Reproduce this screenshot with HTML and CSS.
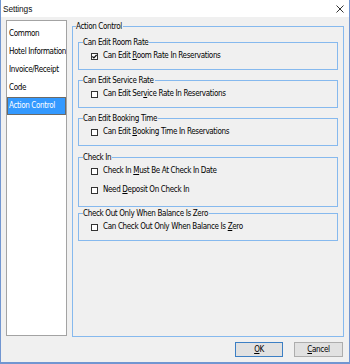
FILE: index.html
```html
<!DOCTYPE html>
<html>
<head>
<meta charset="utf-8">
<link rel="stylesheet" href="styles.css">
</head>
<body>
<div class="window">
  <div class="titlebar">
    <span class="title">Settings</span>
    <svg class="close" width="8" height="8" viewBox="0 0 8 8"><path d="M0.5 0.5 L7.5 7.5 M7.5 0.5 L0.5 7.5" stroke="#333" stroke-width="1" fill="none"/></svg>
  </div>
  <div class="main">
    <ul class="nav">
      <li class="nav-item">Common</li>
      <li class="nav-item">Hotel Information</li>
      <li class="nav-item">Invoice/Receipt</li>
      <li class="nav-item">Code</li>
      <li class="nav-item selected">Action Control</li>
    </ul>
    <fieldset class="group outer">
      <legend class="legend outer-legend">Action Control</legend>
      <fieldset class="group inner g1">
        <legend class="legend">Can Edit Room Rate</legend>
        <div class="row"><span class="cb checked"><svg width="5" height="5" viewBox="0 0 5 5"><path d="M0.4 2.4 L1.9 3.9 L4.6 0.9" stroke="#111" stroke-width="1.3" fill="none"/></svg></span><span>Can Edit <u>R</u>oom Rate In Reservations</span></div>
      </fieldset>
      <fieldset class="group inner g2">
        <legend class="legend">Can Edit Service Rate</legend>
        <div class="row"><span class="cb"></span><span>Can Edit Ser<u>v</u>ice Rate In Reservations</span></div>
      </fieldset>
      <fieldset class="group inner g3">
        <legend class="legend">Can Edit Booking Time</legend>
        <div class="row"><span class="cb"></span><span>Can Edit <u>B</u>ooking Time In Reservations</span></div>
      </fieldset>
      <fieldset class="group inner g4">
        <legend class="legend">Check In</legend>
        <div class="row"><span class="cb"></span><span>Check In <u>M</u>ust Be At Check In Date</span></div>
        <div class="row row-second"><span class="cb"></span><span>Need <u>D</u>eposit On Check In</span></div>
      </fieldset>
      <fieldset class="group inner g5">
        <legend class="legend">Check Out Only When Balance Is Zero</legend>
        <div class="row"><span class="cb"></span><span>Can Check Out Only When Balance Is <u>Z</u>ero</span></div>
      </fieldset>
    </fieldset>
  </div>
  <div class="buttons">
    <button class="btn btn-default"><u>O</u>K</button>
    <button class="btn"><u>C</u>ancel</button>
  </div>
</div>
</body>
</html>
```
FILE: styles.css
```css
html, body {
  margin: 0;
  padding: 0;
  background: #ffffff;
}

.window {
  width: 350px;
  height: 364px;
  box-sizing: border-box;
  border: 1px solid #7196d1;
  border-top: 0;
  border-bottom-width: 2px;
  background: #f0f0f0;
  font-family: "DejaVu Sans Condensed", "DejaVu Sans", sans-serif;
  font-stretch: condensed;
  font-size: 8px;
  letter-spacing: -0.35px;
  color: #000;
  display: flex;
  flex-direction: column;
}

.titlebar {
  height: 17px;
  flex: none;
  background: #ffffff;
  display: flex;
  align-items: center;
  justify-content: space-between;
  padding: 0 5px 0 2px;
}

.title {
  font-family: "Liberation Sans", Arial, sans-serif;
  font-stretch: normal;
  font-size: 8.3px;
  letter-spacing: -0.1px;
  color: #111;
}

.close {
  display: block;
}

.main {
  display: flex;
  gap: 5px;
  padding: 3px 5px 0 5px;
  flex: none;
}

.nav {
  list-style: none;
  margin: 0;
  padding: 4px 0 0 0;
  width: 61px;
  height: 316px;
  box-sizing: border-box;
  background: #ffffff;
  border: 1px solid #a3a3a3;
  flex: none;
  overflow: hidden;
}

.nav-item {
  height: 18px;
  line-height: 18px;
  padding-left: 2px;
  white-space: nowrap;
  overflow: hidden;
}

.nav-item.selected {
  background: #3399ff;
  color: #ffffff;
  border: 1px solid #6c6a66;
  line-height: 16px;
  padding-left: 1px;
  box-sizing: border-box;
}

.group {
  margin: 0;
  border: 1px solid #86b9ee;
  min-width: 0;
  box-sizing: border-box;
}

.legend {
  padding: 0 1px 0 0;
  margin-left: 4px;
  height: 11px;
  line-height: 11px;
  color: #000;
}

.outer {
  width: 272px;
  height: 316px;
  margin-top: 1px;
  padding: 5px 0 0 0;
  display: flex;
  flex-direction: column;
}

.outer-legend {
  margin-left: 3px;
}

.inner {
  margin-left: 5px;
  margin-right: 5px;
  padding: 3px 0 8px 0;
}

.g2, .g3 {
  margin-top: 5px;
}

.g4 {
  margin-top: 6px;
  padding-bottom: 11px;
}

.g5 {
  margin-top: 1px;
}

.row {
  display: flex;
  align-items: center;
  gap: 5px;
  height: 10px;
  line-height: 10px;
  margin-left: 12px;
  white-space: nowrap;
}

.row-second {
  margin-top: 9px;
}

.cb {
  width: 7px;
  height: 7px;
  box-sizing: border-box;
  border: 1px solid #333;
  background: #ffffff;
  display: flex;
  align-items: center;
  justify-content: center;
  flex: none;
}

.cb svg {
  display: block;
}

.buttons {
  display: flex;
  justify-content: flex-end;
  gap: 11px;
  margin-top: 5px;
  padding-right: 6px;
}

.btn {
  height: 15px;
  width: 49px;
  margin: 0;
  padding: 0;
  box-sizing: border-box;
  border: 1px solid #adadad;
  background: #e1e1e1;
  font-family: "DejaVu Sans Condensed", "DejaVu Sans", sans-serif;
  font-stretch: condensed;
  font-size: 8px;
  letter-spacing: -0.35px;
  color: #000;
  line-height: 13px;
}

.btn-default {
  width: 48px;
  border-color: #3c7fc4;
}
```
